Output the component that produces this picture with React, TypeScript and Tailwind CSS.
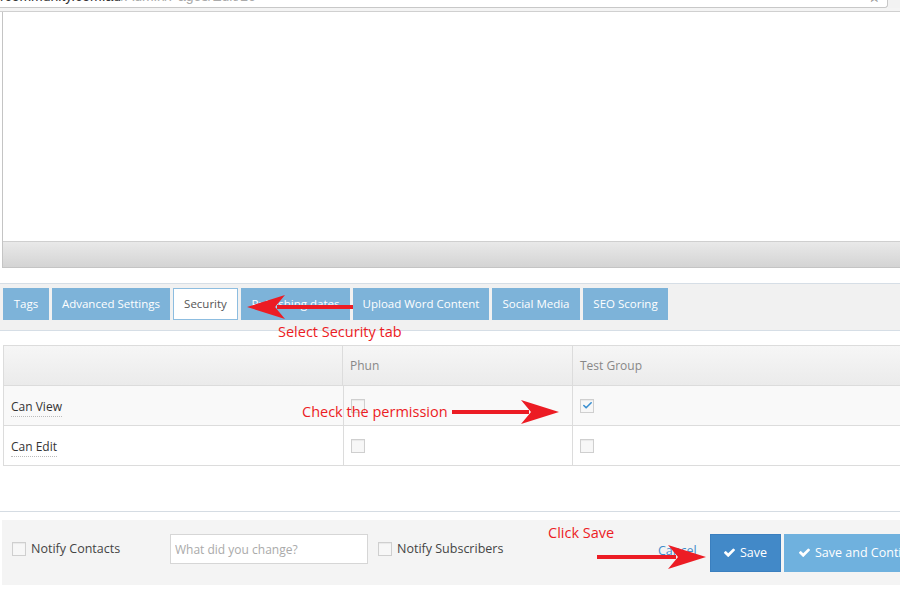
import { Check } from 'lucide-react'

const tabs = [
  { label: 'Tags', w: 'w-[46px]' },
  { label: 'Advanced Settings', w: 'w-[118px]' },
  { label: 'Security', w: 'w-[65px]', active: true },
  { label: 'Publishing dates', w: 'w-[109px]' },
  { label: 'Upload Word Content', w: 'w-[136px]' },
  { label: 'Social Media', w: 'w-[88px]' },
  { label: 'SEO Scoring', w: 'w-[85px]' },
]

function Box({ checked }: { checked?: boolean }) {
  return (
    <span className="inline-flex h-[14px] w-[14px] shrink-0 items-center justify-center border border-[#cfcfcf] bg-[#f7f7f7] shadow-[inset_0_1px_1px_rgba(0,0,0,0.06)]">
      {checked && <Check size={11} strokeWidth={3.5} className="text-[#3b8fd0]" />}
    </span>
  )
}

function FaCheck() {
  return (
    <svg width="11" height="10" viewBox="0 0 1550 1280" className="shrink-0 fill-white">
      <path d="M1550 232q0 40-28 68l-724 724-136 136q-28 28-68 28t-68-28l-136-136-362-362q-28-28-28-68t28-68l136-136q28-28 68-28t68 28l294 295 656-657q28-28 68-28t68 28l136 136q28 28 28 68z" />
    </svg>
  )
}

function Arrow({ dir, w }: { dir: 'left' | 'right'; w: number }) {
  return (
    <svg width={w} height="26" viewBox={`0 0 ${w} 26`} className={dir === 'left' ? 'rotate-180' : ''}>
      <rect x="0" y="11" width={w - 30} height="4" fill="#ec1c24" />
      <path d={`M${w} 13 L${w - 38} 1 L${w - 28} 13 L${w - 38} 25 Z`} fill="#ec1c24" />
    </svg>
  )
}

export default function App() {
  return (
    <div className="relative h-[600px] w-[900px] overflow-hidden bg-white font-['Open_Sans',sans-serif] text-[12px]">
      {/* address bar remnant */}
      <div className="flex h-[8px]">
        <div className="flex h-[8px] w-[888px] overflow-hidden rounded-br-[3px] border-b border-r border-[#c8c8c8] bg-white">
          <div className="-mt-[13px] flex-1 font-['Liberation_Sans',sans-serif] text-[14px] leading-[18px] text-[#aaa]">
            <span className="text-[#333]">rcommunity.com.au</span>/Admin/Pages/Edit/26
          </div>
          <span className="-mt-[12px] mr-[6px] text-[14px] leading-[18px] text-[#555]">☆</span>
        </div>
        <div className="flex-1 bg-[#f2f2f2]" />
      </div>
      <div className="h-[4px] border-b border-[#d0d0d0] bg-[#f4f4f4]" />

      {/* editor */}
      <div className="ml-[2px] flex h-[256px] flex-col border-b border-l border-[#c4c4c4]">
        <div className="flex-1 bg-white" />
        <div className="h-[26px] border-t border-[#cfcfcf] bg-gradient-to-b from-[#e9e9e9] to-[#d4d4d4]" />
      </div>

      {/* tabs */}
      <div className="mt-[15px] flex h-[48px] items-start gap-[3px] border-y border-[#d6dee6] bg-[#f1f1f1] pl-[3px] pt-[4px] text-[11.5px]">
        {tabs.map((t) => (
          <div
            key={t.label}
            className={`${t.w} flex h-[32px] shrink-0 items-center justify-center whitespace-nowrap ${
              t.active
                ? 'border border-[#8dbde0] bg-white text-[#555]'
                : 'bg-[#7db3d9] text-white'
            }`}
          >
            {t.label}
          </div>
        ))}
      </div>

      {/* permissions table */}
      <div className="ml-[3px] mt-[14px] w-[1000px] border border-[#dcdcdc]">
        <div className="grid h-[40px] grid-cols-[339px_230px_1fr] border-b border-[#dcdcdc] bg-gradient-to-b from-[#f6f6f6] to-[#ebebeb] text-[#888]">
          <div className="border-r border-[#dcdcdc]" />
          <div className="flex items-center border-r border-[#dcdcdc] pl-[7px]">Phun</div>
          <div className="flex items-center pl-[7px]">Test Group</div>
        </div>
        <div className="grid h-[40px] grid-cols-[339px_230px_1fr] border-b border-[#dcdcdc] bg-[#f9f9f9] text-[#333]">
          <div className="flex items-center pl-[7px] pt-[4px]">
            <span className="border-b border-dotted border-[#bbb] leading-[18px]">Can View</span>
          </div>
          <div className="flex items-center border-r border-l border-[#dcdcdc] pl-[7px]">
            <Box />
          </div>
          <div className="flex items-center pl-[7px]">
            <Box checked />
          </div>
        </div>
        <div className="grid h-[39px] grid-cols-[339px_230px_1fr] bg-white text-[#333]">
          <div className="flex items-center pl-[7px] pt-[4px]">
            <span className="border-b border-dotted border-[#bbb] leading-[18px]">Can Edit</span>
          </div>
          <div className="flex items-center border-r border-l border-[#dcdcdc] pl-[7px]">
            <Box />
          </div>
          <div className="flex items-center pl-[7px]">
            <Box />
          </div>
        </div>
      </div>

      {/* footer */}
      <div className="mt-[45px] border-t border-[#d5dce3]" />
      <div className="ml-[2px] mt-[8px] flex h-[65px] items-start whitespace-nowrap bg-[#f4f4f4] pl-[10px] text-[#444]">
        <div className="mt-[20px] flex w-[158px] shrink-0 items-center gap-[5px] text-[12.5px]">
          <Box />
          <span>Notify Contacts</span>
        </div>
        <input
          className="mt-[14px] h-[30px] w-[198px] shrink-0 border border-[#d6d6d6] bg-white px-[4px] text-[12px] text-[#555] outline-none placeholder:text-[#aaa]"
          placeholder="What did you change?"
        />
        <div className="ml-[10px] mt-[20px] flex w-[280px] shrink-0 items-center gap-[5px] text-[12.5px]">
          <Box />
          <span>Notify Subscribers</span>
        </div>
        <span className="mt-[22px] w-[52px] shrink-0 text-[12.5px] text-[#428bca]">Cancel</span>
        <div className="mt-[14px] flex h-[38px] w-[71px] shrink-0 items-center justify-center gap-[5px] border border-[#3a7fbf] bg-[#4289c8] text-[12.5px] text-white">
          <FaCheck />
          Save
        </div>
        <div className="ml-[3px] mt-[14px] flex h-[38px] w-[200px] shrink-0 items-center gap-[5px] bg-[#6fb1de] pl-[15px] text-[12.5px] text-white">
          <FaCheck />
          Save and Continue
        </div>
      </div>

      {/* annotations */}
      <div className="absolute left-[247px] top-[294px]">
        <Arrow dir="left" w={106} />
      </div>
      <div className="absolute left-[278px] top-[321px] text-[14.5px] text-[#ec1c24]">Select Security tab</div>

      <div className="absolute left-[302px] top-[401px] text-[14.5px] text-[#ec1c24]">Check the permission</div>
      <div className="absolute left-[452px] top-[399px]">
        <Arrow dir="right" w={107} />
      </div>

      <div className="absolute left-[548px] top-[522px] text-[14.5px] text-[#ec1c24]">Click Save</div>
      <div className="absolute left-[597px] top-[544px]">
        <Arrow dir="right" w={109} />
      </div>
    </div>
  )
}
